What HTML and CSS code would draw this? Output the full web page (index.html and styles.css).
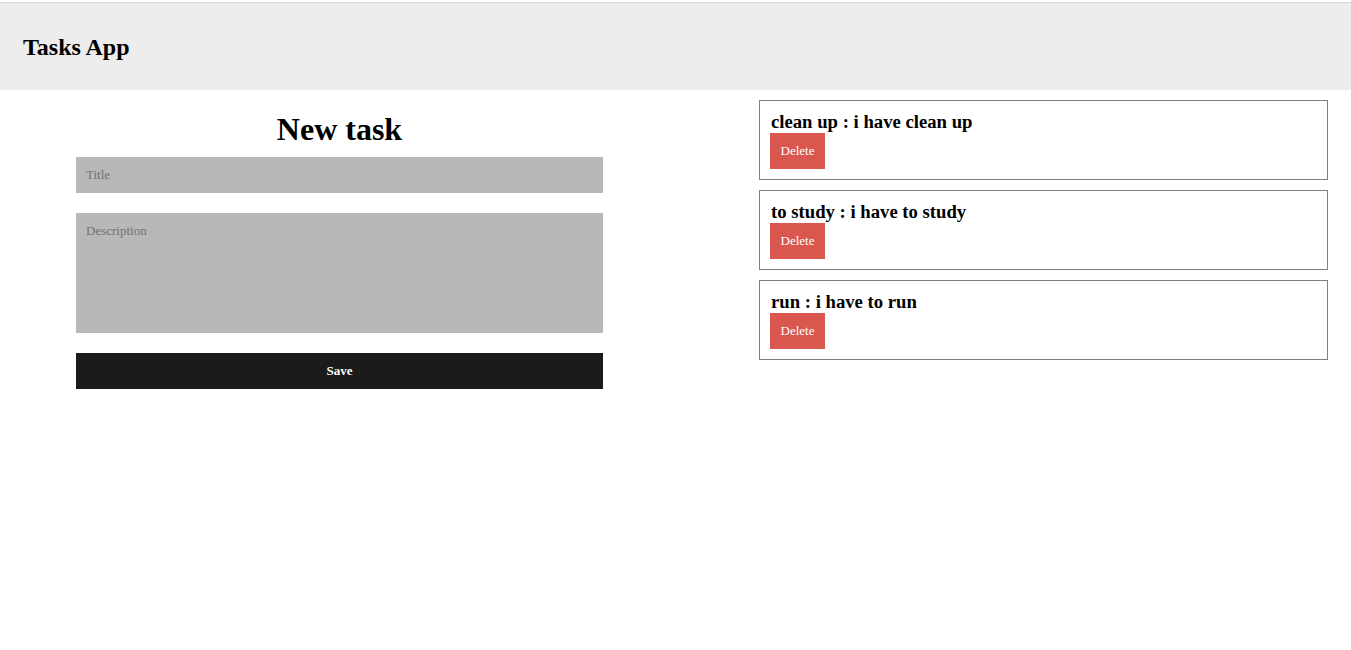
FILE: index.html
```html
<!DOCTYPE html>
<html>
<head>
<meta charset="utf-8">
<title>Tasks App</title>
<link rel="stylesheet" href="styles.css">
</head>
<body>
<header class="topbar">
  <h2 class="brand">Tasks App</h2>
</header>
<main class="layout">
  <section class="form-col">
    <h1 class="form-title">New task</h1>
    <form class="task-form">
      <input class="field" type="text" placeholder="Title">
      <textarea class="field area" placeholder="Description"></textarea>
      <button class="save-btn" type="button">Save</button>
    </form>
  </section>
  <section class="list-col">
    <div class="card">
      <h3 class="card-title">clean up : i have clean up</h3>
      <button class="del-btn" type="button">Delete</button>
    </div>
    <div class="card">
      <h3 class="card-title">to study : i have to study</h3>
      <button class="del-btn" type="button">Delete</button>
    </div>
    <div class="card">
      <h3 class="card-title">run : i have to run</h3>
      <button class="del-btn" type="button">Delete</button>
    </div>
  </section>
</main>
</body>
</html>
```
FILE: styles.css
```css
* { box-sizing: border-box; }
body {
  margin: 0;
  font-family: "Liberation Serif", "Times New Roman", serif;
  color: #000;
  background: #fff;
}
.topbar {
  margin-top: 2px;
  border-top: 1px solid #d6d6d6;
  height: 88px;
  background: #ededed;
  display: flex;
  align-items: center;
  padding-left: 23px;
}
.brand {
  margin: 0;
  font-size: 24px;
  font-weight: bold;
  line-height: 28px;
}
.layout {
  display: grid;
  grid-template-columns: 679px 1fr;
}
.form-col {
  display: flex;
  flex-direction: column;
  align-items: center;
}
.form-title {
  margin: 21px 0 9px;
  font-size: 32px;
  line-height: 37px;
  font-weight: bold;
}
.task-form {
  width: 527px;
  display: flex;
  flex-direction: column;
  gap: 20px;
}
.field {
  display: block;
  width: 100%;
  height: 36px;
  border: none;
  background: #b8b8b8;
  padding: 0 10px;
  font-family: "Liberation Serif", "Times New Roman", serif;
  font-size: 13px;
  color: #333;
  outline: none;
}
.field::placeholder { color: #727272; }
.area {
  height: 120px;
  padding: 10px;
  resize: none;
}
.save-btn {
  height: 36px;
  border: none;
  background: #1b1b1b;
  color: #fff;
  font-family: "Liberation Serif", "Times New Roman", serif;
  font-size: 13px;
  font-weight: bold;
}
.list-col {
  padding: 10px 23px 0 80px;
  display: flex;
  flex-direction: column;
  gap: 10px;
}
.card {
  border: 1px solid #808080;
  height: 80px;
  padding: 10px;
  display: flex;
  flex-direction: column;
  align-items: flex-start;
}
.card-title {
  margin: 0 0 0 1px;
  font-size: 18.7px;
  line-height: 22px;
  font-weight: bold;
}
.del-btn {
  width: 55px;
  height: 36px;
  border: none;
  background: #d9574f;
  color: #fff;
  font-family: "Liberation Serif", "Times New Roman", serif;
  font-size: 13px;
  padding: 0;
}
```
